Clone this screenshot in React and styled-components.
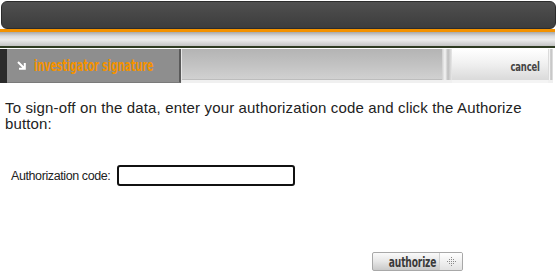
import React from "react";
import styled, { createGlobalStyle } from "styled-components";

const Global = createGlobalStyle`
  html, body { margin: 0; padding: 0; background: #fff; }
  body { font-family: "Liberation Sans", Arial, sans-serif; }
`;

const Page = styled.div`
  width: 558px;
  height: 274px;
  overflow: hidden;
  background: #fff;
`;

const TitleBar = styled.div`
  height: 28px;
  margin: 1px 2px 0 1px;
  border: 1px solid #2c2c2c;
  border-radius: 6px;
  box-sizing: border-box;
  background: linear-gradient(#505050 0%, #474747 45%, #3d3d3d 100%);
`;

const Accent = styled.div`
  height: 3px;
  margin-right: 3px;
  background: #f39200;
`;

const Band = styled.div`
  height: 14px;
  margin-right: 3px;
  background: linear-gradient(#a9a9a9 0%, #dcdcdc 30%, #ececec 55%, #c4c4c4 100%);
  border-bottom: 2px solid #2e3b22;
`;

const TabRow = styled.div`
  display: flex;
  height: 34px;
  margin-top: 1px;
`;

const Strip = styled.div`
  width: 7px;
  flex: none;
  background: #2a2a2a;
`;

const Tab = styled.div`
  width: 174px;
  flex: none;
  display: flex;
  align-items: center;
  gap: 8px;
  padding-left: 10px;
  box-sizing: border-box;
  overflow: hidden;
  background: #8e8e8e;
  border-right: 2px solid #5a5a5a;
  border-bottom: 1px solid #7a7a7a;
`;

const IconBox = styled.span`
  flex: none;
  display: flex;
  width: 9px;
  height: 9px;
`;

const Condensed = styled.span`
  flex: none;
  display: inline-block;
  font-family: "DejaVu Sans Condensed", "DejaVu Sans", sans-serif;
  font-stretch: condensed;
  font-weight: bold;
  font-size: ${(p) => p.size || 15}px;
  color: ${(p) => p.color};
  transform: scaleX(${(p) => p.squeeze || 0.72});
  transform-origin: ${(p) => p.origin || "left"} center;
  white-space: nowrap;
  letter-spacing: -0.2px;
`;

const Filler = styled.div`
  flex: 1;
  background: linear-gradient(#b4b4b4 0%, #c2c2c2 50%, #d2d2d2 100%);
  border-left: 1px solid #e6e6e6;
  border-bottom: 3px solid #f0f0f0;
  box-shadow: inset 0 -1px 0 #bdbdbd;
`;

const Divider = styled.div`
  width: ${(p) => p.w}px;
  flex: none;
  background: linear-gradient(90deg, #cfcfcf 0%, #f4f4f4 30%, #bdbdbd 60%, #e8e8e8 100%);
  border-bottom: 3px solid #f0f0f0;
`;

const Gap = styled.div`
  width: 5px;
  flex: none;
`;

const CancelButton = styled.button`
  width: 96px;
  flex: none;
  border: none;
  padding: 0 8px 6px 0;
  display: flex;
  align-items: flex-end;
  justify-content: flex-end;
  background: linear-gradient(#ffffff 0%, #f1f1f1 45%, #dadada 100%);
  border-bottom: 3px solid #f4f4f4;
  cursor: pointer;
`;

const Body = styled.div`
  padding: 17px 0 0 5px;
  width: 545px;
  box-sizing: border-box;
`;

const Lead = styled.p`
  margin: 0;
  font-size: 15px;
  line-height: 16px;
  color: #222;
  letter-spacing: 0.15px;
`;

const Field = styled.div`
  display: flex;
  align-items: center;
  gap: 7px;
  margin: 33px 0 0 6px;
`;

const Label = styled.label`
  font-size: 12.5px;
  color: #222;
  letter-spacing: -0.4px;
`;

const CodeInput = styled.input`
  width: 178px;
  height: 21px;
  box-sizing: border-box;
  border: 2px solid #111;
  border-radius: 3px;
  padding: 0 3px;
  font-size: 13px;
  outline: none;
`;

const Actions = styled.div`
  display: flex;
  padding-left: 367px;
  margin-top: 66px;
`;

const AuthorizeButton = styled.button`
  width: 91px;
  height: 19px;
  padding: 0;
  display: flex;
  border: 1px solid #a8a8a8;
  border-radius: 2px;
  overflow: hidden;
  background: linear-gradient(#fafafa 0%, #e6e6e6 50%, #c9c9c9 100%);
  cursor: pointer;
`;

const AuthLabel = styled.span`
  flex: 1;
  display: flex;
  align-items: center;
  justify-content: flex-end;
  padding-right: 3px;
`;

const Grip = styled.span`
  width: 24px;
  display: flex;
  align-items: center;
  justify-content: center;
  background: linear-gradient(#ffffff 0%, #e2e2e2 100%);
  border-left: 1px solid #d0d0d0;
`;

const ArrowIcon = () => (
  <IconBox>
    <svg width="9" height="9" viewBox="0 0 9 9">
      <path d="M1 1 L7 7 M2 7.8 H7.8 V2" stroke="#fff" strokeWidth="2" fill="none" />
    </svg>
  </IconBox>
);

const Dots = () => (
  <svg width="11" height="9" viewBox="0 0 11 9">
    {[
      [5, 0], [3, 2], [5, 2], [7, 2], [1, 4], [3, 4], [5, 4], [7, 4], [9, 4], [3, 6], [5, 6], [7, 6], [5, 8],
    ].map(([x, y], i) => (
      <rect key={i} x={x} y={y} width="1" height="1" fill="#8a8a8a" />
    ))}
  </svg>
);

export default function App() {
  return (
    <Page>
      <Global />
      <TitleBar />
      <Accent />
      <Band />
      <TabRow>
        <Strip />
        <Tab>
          <ArrowIcon />
          <Condensed color="#f39200" size={15} squeeze={0.72}>investigator signature</Condensed>
        </Tab>
        <Filler />
        <Divider w={10} />
        <CancelButton>
          <Condensed color="#444" size={13} squeeze={0.72} origin="right">cancel</Condensed>
        </CancelButton>
        <Divider w={5} />
        <Gap />
      </TabRow>
      <Body>
        <Lead>
          To sign-off on the data, enter your authorization code and click the Authorize button:
        </Lead>
        <Field>
          <Label htmlFor="code">Authorization code:</Label>
          <CodeInput id="code" type="password" />
        </Field>
        <Actions>
          <AuthorizeButton>
            <AuthLabel>
              <Condensed color="#3a3a3a" size={13.5} squeeze={0.75} origin="right">authorize</Condensed>
            </AuthLabel>
            <Grip>
              <Dots />
            </Grip>
          </AuthorizeButton>
        </Actions>
      </Body>
    </Page>
  );
}
